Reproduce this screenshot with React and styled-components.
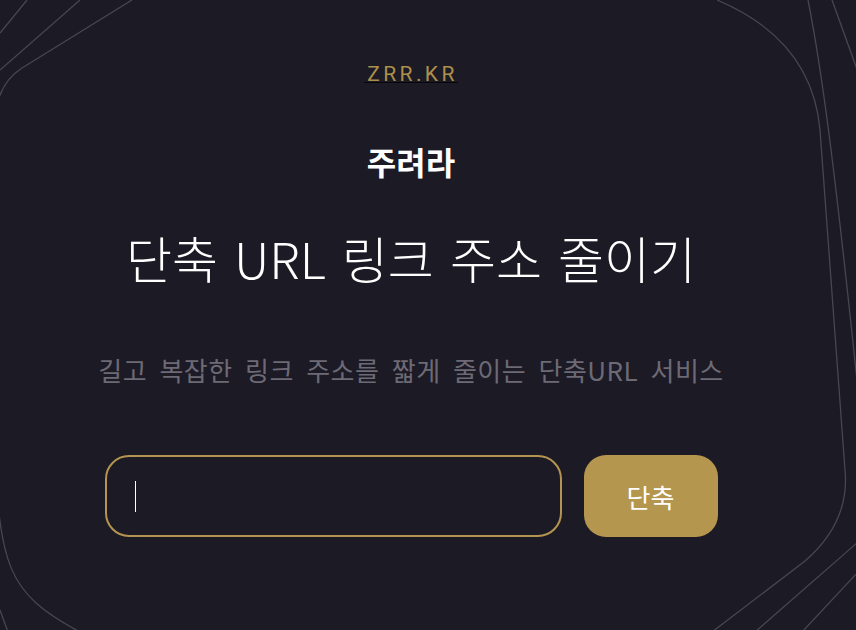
import React from "react";
import styled, { createGlobalStyle } from "styled-components";

const GlobalStyle = createGlobalStyle`
  html, body {
    margin: 0;
    padding: 0;
    background: #1c1a25;
  }
  * {
    box-sizing: border-box;
  }
`;

export default function App() {
  return (
    <Page>
      <GlobalStyle />
      <Lines />
      <Main>
        <Brand href="#">ZRR.KR</Brand>
        <Name>주려라</Name>
        <Heading>단축 URL 링크 주소 줄이기</Heading>
        <Lead>길고 복잡한 링크 주소를 짧게 줄이는 단축URL 서비스</Lead>
        <Form onSubmit={e => e.preventDefault()}>
          <Field>
            <Caret />
            <Input type="text" aria-label="URL" />
          </Field>
          <Button type="submit">단축</Button>
        </Form>
      </Main>
    </Page>
  );
}

// background strokes
const Lines = () => (
  <Deco viewBox="0 0 856 630" preserveAspectRatio="none">
    <g fill="none" stroke="#484650" strokeWidth="1.3">
      <path d="M0,33 L27,0" />
      <path d="M0,70 L80,0" />
      <path d="M132,0 L22,68 Q-6,86 -6,130 L-6,440 C0,565 5,592 80,632" />
      <path d="M0,610 L8,632" />
      <path d="M717,0 Q812,40 820,130 L845,470 Q850,522 805,561 L712,632" />
      <path d="M808,0 C822,70 835,170 858,390" />
      <path d="M832,0 L858,72" />
      <path d="M858,542 L755,632" />
      <path d="M858,572 L802,632" />
    </g>
  </Deco>
);

const Page = styled.div`
  position: relative;
  width: 856px;
  height: 630px;
  overflow: hidden;
  background: #1c1a25;
  font-family: "Noto Sans CJK KR", "Noto Sans", sans-serif;
`;

const Deco = styled.svg`
  position: absolute;
  inset: 0;
  width: 100%;
  height: 100%;
  pointer-events: none;
`;

const Main = styled.main`
  position: relative;
  display: flex;
  flex-direction: column;
  align-items: center;
  padding: 66px 34px 0 0;
`;

const Brand = styled.a`
  font-family: Roboto, "Noto Sans", sans-serif;
  font-size: 21px;
  font-weight: 400;
  letter-spacing: 3.4px;
  line-height: 16px;
  color: #ad8f4c;
  text-decoration: none;
  border-bottom: 1px solid #07060a;
  padding-left: 3px;
`;

const Name = styled.h2`
  margin: 58px 0 0;
  font-size: 32px;
  font-weight: 700;
  line-height: 40px;
  color: #ffffff;
`;

const Heading = styled.h1`
  margin: 46px 0 0;
  font-family: "Noto Sans CJK KR Light", "Noto Sans CJK KR", sans-serif;
  font-size: 50px;
  font-weight: 300;
  line-height: 60px;
  word-spacing: 5px;
  color: #ffffff;
`;

const Lead = styled.p`
  margin: 67px 0 0;
  font-size: 26px;
  font-weight: 400;
  line-height: 32px;
  letter-spacing: 0.5px;
  word-spacing: 6px;
  color: #6d6a76;
`;

const Form = styled.form`
  display: flex;
  gap: 22px;
  margin-top: 69px;
`;

const Field = styled.div`
  display: flex;
  align-items: center;
  width: 457px;
  height: 82px;
  padding-left: 28px;
  border: 2px solid #b4954f;
  border-radius: 24px;
`;

const Caret = styled.span`
  width: 1px;
  height: 31px;
  background: #ffffff;
`;

const Input = styled.input`
  flex: 1;
  height: 100%;
  border: 0;
  outline: none;
  background: transparent;
  color: #ffffff;
  font: inherit;
  font-size: 22px;
`;

const Button = styled.button`
  width: 134px;
  height: 82px;
  border: 0;
  border-radius: 22px;
  background: #b5964f;
  color: #ffffff;
  font-family: "Noto Sans CJK KR", sans-serif;
  font-size: 26px;
  font-weight: 400;
  cursor: pointer;
`;
